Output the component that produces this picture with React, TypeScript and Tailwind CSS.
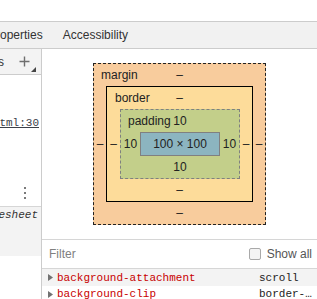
import React from "react";

function Dash() {
  return <span>‒</span>;
}

export default function App() {
  return (
    <div className="w-[317px] h-[299px] overflow-hidden bg-white font-['Liberation_Sans',Arial,sans-serif] text-[12px] text-[#333] flex flex-col">
      <div className="h-[21px] shrink-0 bg-white" />
      {/* tab bar */}
      <div className="h-[28px] shrink-0 border-y border-[#cccccc] bg-[#f1f1f1] flex items-center whitespace-nowrap">
        <div className="ml-[-22px] px-[10px] leading-[16px] text-[#333]">Properties</div>
        <div className="px-[10px] leading-[16px] text-[#333]">Accessibility</div>
      </div>
      <div className="flex flex-1 min-h-0">
        {/* left panel */}
        <div className="w-[42px] shrink-0 border-r border-[#cccccc] flex flex-col overflow-hidden">
          <div className="h-[26px] shrink-0 bg-[#f3f3f3] border-b border-[#cccccc] relative flex items-center">
            <div className="absolute right-[37px] top-[5px] leading-[16px] whitespace-nowrap text-[#333]">.cls</div>
            <svg className="absolute left-[19px] top-[7px]" width="11" height="11" viewBox="0 0 11 11">
              <path d="M5.5 0.5 V10.5 M0.5 5.5 H10.5" stroke="#6e6e6e" strokeWidth="1.4" />
            </svg>
            <svg className="absolute left-[31px] top-[18px]" width="5" height="5" viewBox="0 0 5 5">
              <path d="M5 0 V5 H0 Z" fill="#444" />
            </svg>
          </div>
          <div className="mt-[41px] h-[14px] flex justify-end pr-[2px] overflow-hidden whitespace-nowrap">
            <span className="font-['Liberation_Mono',monospace] text-[11px] leading-[14px] text-[#3b4048] underline">index.html:30</span>
          </div>
          <div className="mt-[57px] h-[13px] flex flex-col items-center gap-[3px] pl-[8px]">
            <div className="w-[2px] h-[2px] bg-[#7a7a7a]" />
            <div className="w-[2px] h-[2px] bg-[#7a7a7a]" />
            <div className="w-[2px] h-[2px] bg-[#7a7a7a]" />
          </div>
          <div className="mt-[6px] border-t border-[#d6d6d6] bg-[#f3f3f3] h-[50px] flex justify-end pr-[3px] pt-[1px] overflow-hidden whitespace-nowrap">
            <span className="font-['Liberation_Mono',monospace] italic text-[11px] leading-[14px] text-[#333]">user agent stylesheet</span>
          </div>
        </div>
        {/* right panel */}
        <div className="flex-1 flex flex-col min-w-0">
          <div className="h-[190px] shrink-0 flex items-center justify-center">
            {/* margin */}
            <div className="relative border border-dashed border-[#222] bg-[#f8cc9d] flex flex-col items-stretch text-[#222]">
              <div className="absolute left-[7px] top-[3px] leading-[16px]">margin</div>
              <div className="h-[22px] pt-[3px] leading-[16px] text-center"><Dash /></div>
              <div className="flex items-center">
                <div className="w-[12px] text-center leading-[16px]"><Dash /></div>
                {/* border */}
                <div className="relative border border-black bg-[#fddc9a] flex flex-col">
                  <div className="absolute left-[8px] top-[3px] leading-[16px]">border</div>
                  <div className="h-[22px] pt-[3px] leading-[16px] text-center"><Dash /></div>
                  <div className="flex items-center">
                    <div className="w-[13px] text-center leading-[16px]"><Dash /></div>
                    {/* padding */}
                    <div className="relative border border-dashed border-[#808080] bg-[#c3cf8a] flex flex-col">
                      <div className="absolute left-[7px] top-[3px] leading-[16px]">padding</div>
                      <div className="h-[22px] pt-[3px] leading-[16px] text-center">10</div>
                      <div className="flex items-center">
                        <div className="w-[19px] text-center leading-[16px]">10</div>
                        <div className="w-[80px] h-[24px] border border-[#808080] bg-[#8cb5c0] flex items-center justify-center leading-[16px]">
                          100 × 100
                        </div>
                        <div className="w-[19px] text-center leading-[16px]">10</div>
                      </div>
                      <div className="h-[22px] pt-[3px] leading-[16px] text-center">10</div>
                    </div>
                    <div className="w-[12px] text-center leading-[16px]"><Dash /></div>
                  </div>
                  <div className="h-[22px] pt-[3px] leading-[16px] text-center"><Dash /></div>
                </div>
                <div className="w-[12px] text-center leading-[16px]"><Dash /></div>
              </div>
              <div className="h-[22px] pt-[3px] leading-[16px] text-center"><Dash /></div>
            </div>
          </div>
          {/* filter row */}
          <div className="h-[30px] shrink-0 border-y border-[#d6d6d6] flex items-center pl-[7px] pr-[5px]">
            <span className="flex-1 text-[#808080] leading-[16px]">Filter</span>
            <div className="w-[12px] h-[12px] rounded-[2px] border border-[#a9a9a9] bg-[#f4f4f4] mr-[6px]" />
            <span className="text-[#555] leading-[16px]">Show all</span>
          </div>
          {/* rows */}
          <div className="font-['Liberation_Mono',monospace] text-[11px]">
            <div className="h-[17px] bg-[#f3f3f3] flex items-center">
              <svg className="ml-[6px] mr-[4px]" width="5" height="7" viewBox="0 0 5 7">
                <path d="M0 0 L5 3.5 L0 7 Z" fill="#727272" />
              </svg>
              <span className="w-[202px] text-[#c80000] whitespace-nowrap overflow-hidden leading-[14px]">background-attachment</span>
              <span className="flex-1 text-[#222] whitespace-nowrap overflow-hidden leading-[14px]">scroll</span>
            </div>
            <div className="h-[16px] flex items-center">
              <svg className="ml-[6px] mr-[4px]" width="5" height="7" viewBox="0 0 5 7">
                <path d="M0 0 L5 3.5 L0 7 Z" fill="#727272" />
              </svg>
              <span className="w-[202px] text-[#c80000] whitespace-nowrap overflow-hidden leading-[14px]">background-clip</span>
              <span className="flex-1 min-w-0 text-[#222] whitespace-nowrap overflow-hidden text-ellipsis leading-[14px]">border-box</span>
            </div>
          </div>
        </div>
      </div>
    </div>
  );
}
